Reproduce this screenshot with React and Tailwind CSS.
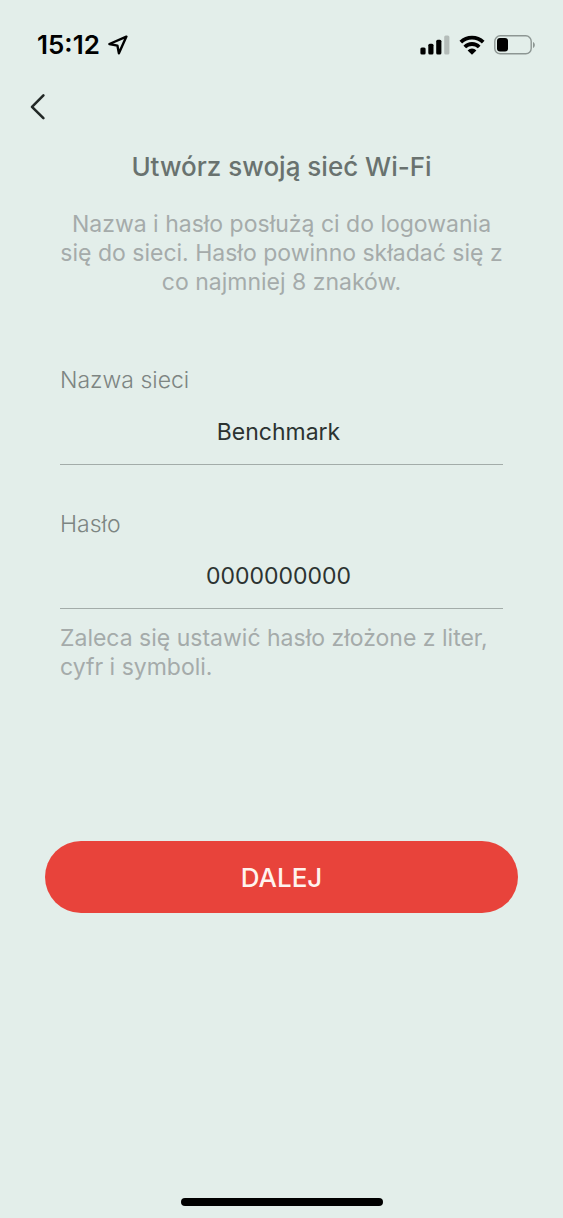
import React, { useState } from "react";

const LocationIcon = () => (
  <svg
    width="20"
    height="20"
    viewBox="0 0 20 20"
    fill="none"
    stroke="currentColor"
    strokeWidth="2.4"
    strokeLinejoin="round"
    aria-hidden="true"
  >
    <path d="M18.4 1.6 1.4 9 9.4 10.6 10.9 18.2Z" />
  </svg>
);

const SignalIcon = () => (
  <svg width="30" height="20" viewBox="0 0 30 20" aria-hidden="true">
    <rect x="0.4" y="12.4" width="5.2" height="7.2" rx="1.5" />
    <rect x="8.3" y="8.8" width="5.2" height="10.8" rx="1.5" />
    <rect x="16.2" y="4.8" width="5.2" height="14.8" rx="1.5" />
    <rect x="24.2" y="0.6" width="5.2" height="19" rx="1.5" fill="#b4bcb9" />
  </svg>
);

const WifiIcon = () => (
  <svg
    width="26"
    height="20"
    viewBox="0 0 26 20"
    fill="none"
    stroke="currentColor"
    strokeWidth="3.8"
    aria-hidden="true"
  >
    <path d="M1.8 7.2a16.2 16.2 0 0 1 22.4 0" />
    <path d="M5.8 12a10.2 10.2 0 0 1 14.4 0" />
    <path d="M13 19.8 8.6 15.4a6.2 6.2 0 0 1 8.8 0Z" fill="currentColor" stroke="none" />
  </svg>
);

const BatteryIcon = () => (
  <svg width="42" height="20" viewBox="0 0 42 20" aria-hidden="true">
    <rect
      x="0.8"
      y="0.8"
      width="36.4"
      height="18"
      rx="5.4"
      fill="none"
      stroke="#8d9693"
      strokeWidth="1.4"
    />
    <rect x="3" y="3" width="11" height="13.6" rx="3" />
    <path d="M39 7v6c2.4-1 2.4-5 0-6Z" fill="#8d9693" />
  </svg>
);

const StatusBar = () => (
  <div className="flex h-[89px] items-center justify-between pr-[27px] pl-[37px] text-black">
    <div className="flex items-center gap-2">
      <span className="text-[26px] font-semibold">15:12</span>
      <LocationIcon />
    </div>
    <div className="flex items-center gap-[9px]">
      <SignalIcon />
      <WifiIcon />
      <BatteryIcon />
    </div>
  </div>
);

const Field = ({ id, label, value, onChange }) => (
  <div>
    <label htmlFor={id} className="block font-light text-[#7d8582]">
      {label}
    </label>
    <input
      id={id}
      type="text"
      value={value}
      autoComplete="off"
      onChange={(e) => onChange(e.target.value)}
      className="mt-3 h-[58px] w-full border-b border-[#a3aca9] pr-1.5 pb-2 text-center text-[#2c3331] outline-none"
    />
  </div>
);

const App = () => {
  const [name, setName] = useState("Benchmark");
  const [password, setPassword] = useState("0000000000");

  return (
    <div className="flex min-h-screen flex-col bg-[#e3eeea] font-['Inter',sans-serif]">
      <StatusBar />
      <div className="flex h-9 items-center px-6">
        <button type="button" aria-label="Wstecz" className="text-[#222826]">
          <svg
            width="28"
            height="28"
            viewBox="0 0 28 28"
            fill="none"
            stroke="currentColor"
            strokeWidth="2.6"
            strokeLinecap="round"
            strokeLinejoin="round"
          >
            <path d="M19.4 2.4 8 13.8l11.4 11.4" />
          </svg>
        </button>
      </div>

      <form
        className="flex flex-col px-[45px] text-[23px] leading-[29px]"
        onSubmit={(e) => e.preventDefault()}
      >
        <div className="px-[15px]">
          <h1 className="mt-6 text-center text-[26px] leading-9 font-medium text-[#69726f]">
            Utwórz swoją sieć Wi-Fi
          </h1>
          <p className="-mx-2 mt-[25px] text-center text-[#a5abaa]">
            Nazwa i hasło posłużą ci do logowania
            <br />
            się do sieci. Hasło powinno składać się z
            <br />
            co najmniej 8 znaków.
          </p>

          <div className="mt-[69px] flex flex-col gap-[45px]">
            <Field
              id="network-name"
              label="Nazwa sieci"
              value={name}
              onChange={setName}
            />
            <Field
              id="network-password"
              label="Hasło"
              value={password}
              onChange={setPassword}
            />
          </div>
          <p className="mt-[15px] text-[#a5abaa]">
            Zaleca się ustawić hasło złożone z liter, cyfr i symboli.
          </p>
        </div>

        <button
          type="submit"
          className="mt-[159px] h-18 rounded-full bg-[#e8433b] text-[26px] font-medium text-[#fff3ee]"
        >
          DALEJ
        </button>
      </form>

      <div className="mx-auto mt-auto mb-3 h-2 w-[202px] rounded-full bg-black" />
    </div>
  );
};

export default App;
